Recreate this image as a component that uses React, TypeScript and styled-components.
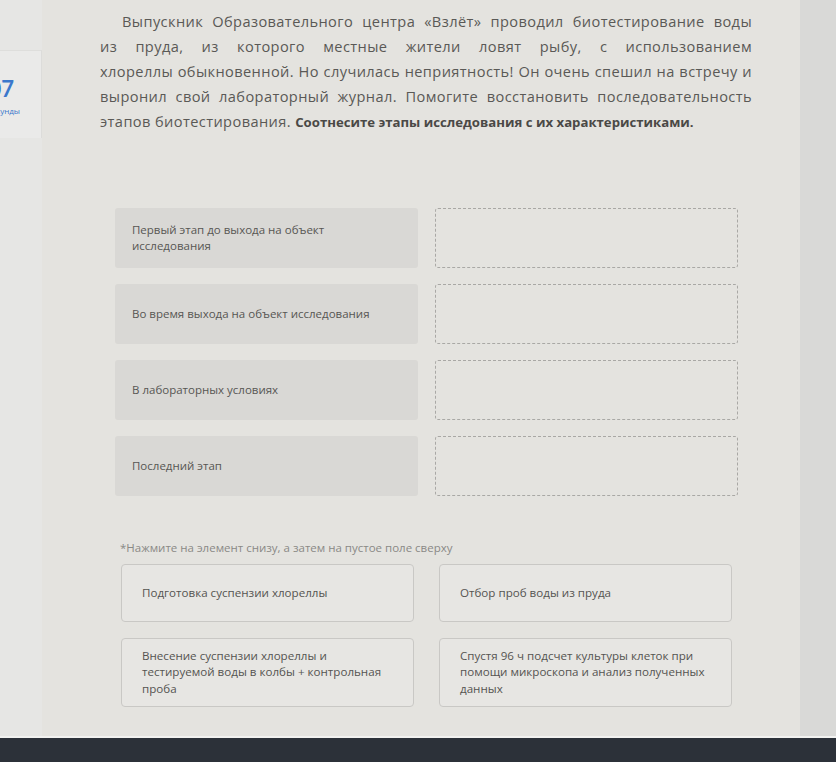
import styled, { createGlobalStyle } from 'styled-components'

const GlobalStyle = createGlobalStyle`
  html, body {
    margin: 0;
    padding: 0;
    background: #e3e2de;
  }
  body {
    font-family: 'Open Sans', 'Noto Sans', sans-serif;
    color: #555451;
  }
`

const questionLines = [
  'Выпускник Образовательного центра «Взлёт» проводил биотестирование воды',
  'из пруда, из которого местные жители ловят рыбу, с использованием',
  'хлореллы обыкновенной. Но случилась неприятность! Он очень спешил на встречу и',
  'выронил свой лабораторный журнал. Помогите восстановить последовательность'
]

const stages = [
  'Первый этап до выхода на объект исследования',
  'Во время выхода на объект исследования',
  'В лабораторных условиях',
  'Последний этап'
]

const options = [
  'Подготовка суспензии хлореллы',
  'Отбор проб воды из пруда',
  'Внесение суспензии хлореллы и тестируемой воды в колбы + контрольная проба',
  'Спустя 96 ч подсчет культуры клеток при помощи микроскопа и анализ полученных данных'
]

const App = () => (
  <>
    <GlobalStyle />
    <Screen>
      <Page>
        <Sidebar>
          <TimerBox>
            <TimerValue>07</TimerValue>
            <TimerLabel>секунды</TimerLabel>
          </TimerBox>
        </Sidebar>
        <Main>
          <Question>
            {questionLines.map((l, i) => (
              <Line key={l} $first={i === 0}>
                {l}
              </Line>
            ))}
            <LastLine>
              этапов биотестирования.{' '}
              <strong>Соотнесите этапы исследования с их характеристиками.</strong>
            </LastLine>
          </Question>

          <MatchGrid>
            {stages.map((s) => (
              <Row key={s}>
                <Stage>{s}</Stage>
                <DropZone />
              </Row>
            ))}
          </MatchGrid>

          <Hint>*Нажмите на элемент снизу, а затем на пустое поле сверху</Hint>

          <OptionGrid>
            {options.map((o, i) => (
              <Option key={o} $tall={i > 1}>
                {o}
              </Option>
            ))}
          </OptionGrid>
        </Main>
        <Gutter />
      </Page>
      <BottomBar />
    </Screen>
  </>
)

const Screen = styled.div`
  display: flex;
  flex-direction: column;
  height: 762px;
  overflow: hidden;
`

const Page = styled.div`
  flex: 1;
  display: flex;
`

const Sidebar = styled.div`
  width: 42px;
  flex-shrink: 0;
  background: #e6e6e4;
  overflow: hidden;
  padding-top: 50px;
  box-sizing: border-box;
  display: flex;
  justify-content: flex-end;
`

const TimerBox = styled.div`
  width: 80px;
  height: 88px;
  flex-shrink: 0;
  background: #eaeae9;
  border-top: 1px solid #dededc;
  border-right: 1px solid #dcdcda;
  display: flex;
  flex-direction: column;
  align-items: flex-end;
  padding: 26px 21px 0 0;
  box-sizing: border-box;
`

const TimerValue = styled.div`
  font-family: 'Lato', sans-serif;
  font-size: 22px;
  font-weight: 700;
  line-height: 24px;
  color: #3b78cc;
  margin-right: 6px;
`

const TimerLabel = styled.div`
  font-size: 8px;
  color: #3b78cc;
  margin-top: 4px;
`

const Main = styled.div`
  flex: 1;
  background: #e4e3df;
  padding: 9px 0 0 58px;
  box-sizing: border-box;
`

const Question = styled.div`
  width: 652px;
  font-size: 14.6px;
  line-height: 25px;
  color: #5a5956;
  letter-spacing: 0.4px;

  strong {
    font-size: 13.2px;
    font-weight: 700;
    letter-spacing: 0;
    color: #4a4946;
  }
`

const Line = styled.div<{ $first: boolean }>`
  text-align: justify;
  text-align-last: justify;
  padding-left: ${(p) => (p.$first ? 22 : 0)}px;
  white-space: nowrap;
`

const LastLine = styled.div`
  white-space: nowrap;
`

const MatchGrid = styled.div`
  display: flex;
  flex-direction: column;
  gap: 16px;
  margin: 73px 0 0 15px;
`

const Row = styled.div`
  display: grid;
  grid-template-columns: 303px 303px;
  gap: 17px;
  height: 60px;
`

const Stage = styled.div`
  background: #d9d8d5;
  border-radius: 3px;
  display: flex;
  align-items: center;
  padding: 0 38px 0 17px;
  font-size: 11.5px;
  line-height: 16px;
  color: #575653;
`

const DropZone = styled.div`
  border: 1px dashed #a9a8a5;
  border-radius: 3px;
`

const Hint = styled.div`
  margin: 43px 0 0 20px;
  font-size: 11.5px;
  line-height: 17px;
  color: #8a8986;
`

const OptionGrid = styled.div`
  display: grid;
  grid-template-columns: 293px 293px;
  column-gap: 25px;
  row-gap: 16px;
  margin: 8px 0 0 21px;
`

const Option = styled.div<{ $tall: boolean }>`
  height: ${(p) => (p.$tall ? 69 : 58)}px;
  box-sizing: border-box;
  border: 1px solid #c9c8c5;
  border-radius: 4px;
  background: #e7e6e3;
  display: flex;
  align-items: center;
  padding: 0 26px 0 20px;
  font-size: 11.6px;
  line-height: 16.5px;
  color: #555451;
`

const Gutter = styled.div`
  width: 36px;
  flex-shrink: 0;
  background: #d9d9d7;
`

const BottomBar = styled.div`
  height: 24px;
  flex-shrink: 0;
  background: #2c3139;
  border-top: 2px solid #f2f2f0;
`

export default App
